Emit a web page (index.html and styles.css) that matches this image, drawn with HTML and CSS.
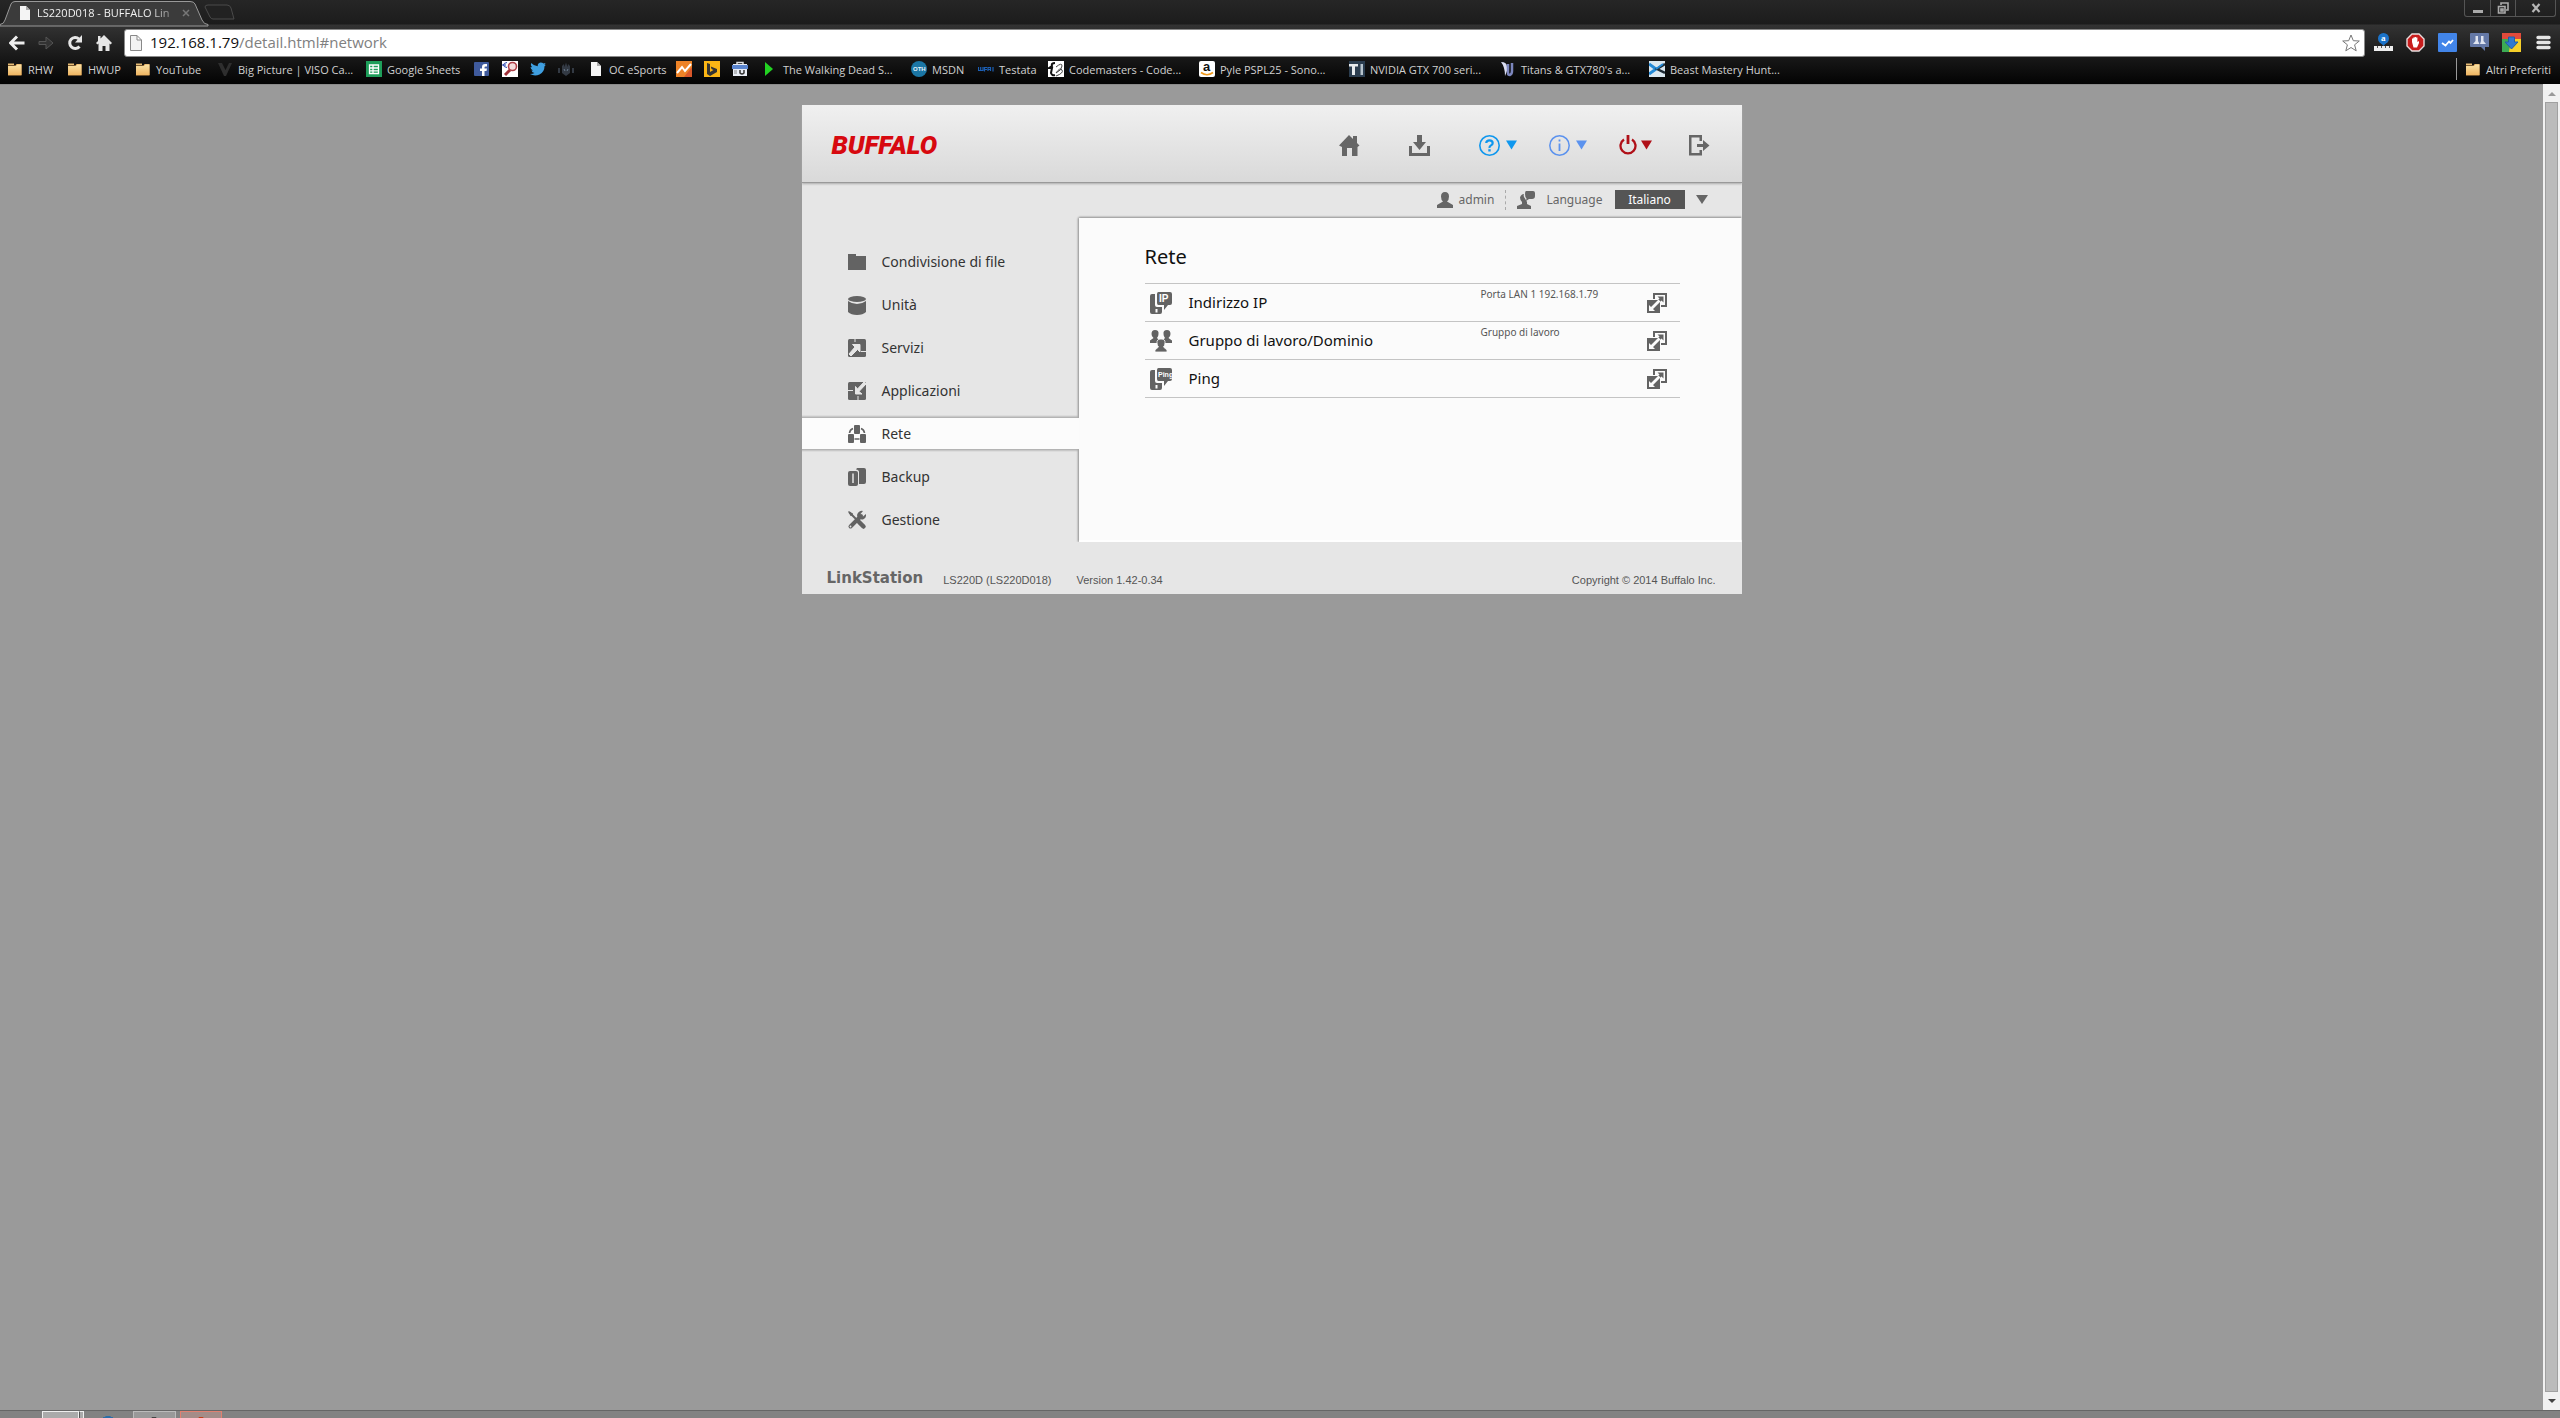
FILE: index.html
```html
<!DOCTYPE html>
<html lang="it">
<head>
<meta charset="utf-8">
<title>LS220D018 - BUFFALO LinkStation</title>
<link rel="stylesheet" href="styles.css">
</head>
<body>
<svg class="defs" aria-hidden="true">
  <defs>
    <linearGradient id="fold" x1="0" y1="0" x2="0" y2="1"><stop offset="0" stop-color="#fbe3a6"/><stop offset="1" stop-color="#efb562"/></linearGradient>
    <symbol id="folder" viewBox="0 0 16 16"><path d="M1 4.500V14.500H14.500V3H9.500L8.500 4.500Z" fill="#d99b4c"/><path d="M1 5H9L10 3.500H14.500V14H1Z" fill="url(#fold)"/><path d="M1 2.500H7V4H1Z" fill="#e7bd77"/></symbol>
    <symbol id="page" viewBox="0 0 16 16"><path d="M3 1H9L13 5V15H3Z" fill="#f4f4f4"/><path d="M9 1L13 5H9Z" fill="#aaa"/></symbol>
    <symbol id="expand" viewBox="0 0 20 20"><path d="M6 0H20V14H14V12H18V2H8V6H6Z" fill="#636363"/><path d="M0 7H13V20H0Z" fill="#636363"/><path d="M10.500 3.500H16.500V9.500L14.500 7.500L11.500 10.500L9.500 8.500L12.500 5.500Z" fill="#636363"/><path d="M2 12L4 14L11.500 6.500L13.500 8.500L6 16L8 18H2Z" fill="#fbfbfb"/></symbol>
    <symbol id="nas" viewBox="0 0 22 22"><path d="M2 2H5V13Q5 15 7 15H12V20Q12 22 10 22H2Q0 22 0 20V4Q0 2 2 2Z"/><path d="M5.500 17H7.500V20.500H5.500Z" fill="#fbfbfb"/><path d="M8.500 0H20Q22 0 22 2V11Q22 13 20 13H18L14 18V13H8.500Q7 13 7 11V2Q7 0 8.500 0Z"/></symbol>
    <symbol id="tri" viewBox="0 0 12 10"><path d="M0 0H12L6 10Z"/></symbol>
  </defs>
</svg>

<header class="chrome">
  <div class="tabs">
    <svg class="tab-shape" viewBox="0 0 200 25" aria-hidden="true"><path d="M0 24.500Q4 24 5 20L11 4Q12 1.500 15 1.500H190Q194 1.500 195 4L202 20Q204 24.500 208 24.500V26H0Z" fill="#3b3b3b" stroke="#999"/><path d="M208 5H227Q230 5 231 8L234 19H213Q211 19 210 17L205 7Q205 5 208 5Z" fill="#222" stroke="#4a4a4a"/></svg>
    <div class="tab"><svg class="i16"><use href="#page"/></svg><span class="tab-title">LS220D018 - BUFFALO Lin</span><button class="plain tab-close" aria-label="Chiudi scheda"><svg viewBox="0 0 8 8"><path d="M1 1L7 7M7 1L1 7" stroke="#777" stroke-width="1.500"/></svg></button></div>
    <div class="win">
      <button class="plain" aria-label="Riduci"><svg viewBox="0 0 12 12"><path d="M1 8H11V11H1Z" fill="#aaa"/></svg></button>
      <button class="plain" aria-label="Ripristina"><svg viewBox="0 0 12 12"><path d="M4 3V1H11V8H9M1.500 4.500H8V11H1.500ZM4 7H6V9H4Z" fill="none" stroke="#aaa" stroke-width="1.600"/></svg></button>
      <button class="plain" aria-label="Chiudi"><svg viewBox="0 0 12 12"><path d="M2.500 2L9.500 10M9.500 2L2.500 10" stroke="#b5b5b5" stroke-width="2.200"/></svg></button>
    </div>
  </div>

  <div class="toolbar">
    <button class="plain" aria-label="Indietro"><svg viewBox="0 0 16 16"><path d="M8 1.500L1.500 8L8 14.500M2 8H15.500" fill="none" stroke="#eee" stroke-width="3"/></svg></button>
    <button class="plain" aria-label="Avanti"><svg viewBox="0 0 16 16"><path d="M1 6.500H8V2L15 8L8 14V9.500H1Z" fill="#333" stroke="#555"/></svg></button>
    <button class="plain" aria-label="Ricarica"><svg viewBox="0 0 16 16"><path d="M12.500 11.500A5.500 5.500 0 1 1 12 4" fill="none" stroke="#e6e6e6" stroke-width="3"/><path d="M15 0V7.500H8Z" fill="#e6e6e6"/></svg></button>
    <button class="plain" aria-label="Pagina iniziale"><svg viewBox="0 0 16 16"><path d="M8 0L16 8L14.500 9.500L13.500 8.500V16H9.500V11H6.500V16H2.500V8.500L1.500 9.500L0 8L2 6V1H4.500V3.500Z" fill="#e6e6e6"/></svg></button>
    <div class="omnibox">
      <svg class="i16" viewBox="0 0 16 16"><path d="M2.500 .500H9L13.500 5V15.500H2.500ZM9 .500V5H13.500" fill="#f3f3f3" stroke="#888"/></svg>
      <a class="url" href="#network"><span class="host">192.168.1.79</span>/detail.html#network</a>
      <button class="plain" aria-label="Aggiungi ai preferiti"><svg class="i18" viewBox="0 0 18 18"><path d="M9 1L11.300 6.700L17.300 7L12.600 10.800L14.200 16.800L9 13.500L3.800 16.800L5.400 10.800L.7 7L6.700 6.700Z" fill="#fff" stroke="#777"/></svg></button>
    </div>
    <div class="ext">
      <svg viewBox="0 0 19 19"><circle cx="9.500" cy="5.500" r="5.500" fill="#1b73c9"/><path d="M7 10H12L9.500 13Z" fill="#1b73c9"/><text x="7" y="8" fill="#fff" font-size="9" font-weight="700" font-family="Liberation Serif, serif">a</text><path d="M0 13H19V18H0Z" fill="#eee"/><path d="M3.500 13V15M7.500 13V15M11.500 13V15M15.500 13V15" stroke="#555"/></svg>
      <svg viewBox="0 0 19 19"><path d="M6 1H13L18 6V13L13 18H6L1 13V6Z" fill="#c81d1d" stroke="#e8dede" stroke-width="1.400"/><path d="M6 9V5.500H7.300V4.500H8.700V4H10V4.500H11.400V9L13 8V10L11 14.500H7.500Z" fill="#fff"/></svg>
      <svg viewBox="0 0 19 19"><rect width="19" height="19" rx="1" fill="#4285e9"/><path d="M4 10L7.500 12.500L11 8.500L12.500 10L15 7" fill="none" stroke="#fff" stroke-width="1.800"/></svg>
      <svg viewBox="0 0 19 19"><path d="M1 0H18Q19 0 19 1V14H15V18L11 14H1Q0 14 0 13V1Q0 0 1 0Z" fill="#6478a6"/><path d="M5.500 3H8V8L9.500 11H3L5.500 8ZM11 3H13.500V8L16 11H10L11 8Z" fill="#dfe4f0"/></svg>
      <svg viewBox="0 0 19 19"><path d="M0 0H19V7H0Z" fill="#e24a3b"/><path d="M0 6H9V19H0Z" fill="#3cab54"/><path d="M9 6H19V19H7Z" fill="#f6cf29"/><path d="M6.500 4H12.500V9H16L9.500 16L3 9H6.500Z" fill="#3079d0" stroke="#205da6"/></svg>
      <button class="plain" aria-label="Menu"><svg viewBox="0 0 19 19"><path d="M4 4.500H15M4 9.500H15M4 14.500H15" stroke="#e5e5e5" stroke-width="3.400" stroke-linecap="round"/></svg></button>
    </div>
  </div>

  <nav class="bookmarks">
    <a href="#"><svg><use href="#folder"/></svg>RHW</a>
    <a href="#"><svg><use href="#folder"/></svg>HWUP</a>
    <a href="#"><svg><use href="#folder"/></svg>YouTube</a>
    <a href="#"><svg viewBox="0 0 16 16"><path d="M1 2L5 2L8.500 9L12 2H15L9 15H7Z" fill="#2e2e2e"/></svg>Big Picture | VISO Ca...</a>
    <a href="#"><svg viewBox="0 0 16 16"><rect width="16" height="16" fill="#1e9e5a"/><path d="M3.500 4H12.500V12.500H3.500ZM3.500 7H12.500M3.500 9.800H12.500M7 4V12.500" fill="none" stroke="#fff" stroke-width="1.300"/></svg>Google Sheets</a>
    <a href="#" aria-label="Facebook"><svg viewBox="0 0 16 16"><rect y="1" width="15" height="14" rx="1" fill="#3f5a9c"/><path d="M8 15V10H6V7.500H8V6Q8 3 11 3H13V5.500H11.500Q10.500 5.500 10.500 6.500V7.500H13L12.500 10H10.500V15Z" fill="#fff"/></svg></a>
    <a href="#" aria-label="Cerca prezzi"><svg viewBox="0 0 16 16"><rect width="16" height="16" fill="#fff"/><path d="M8 9L3 14" stroke="#a03038" stroke-width="3"/><circle cx="10.500" cy="5.500" r="4" fill="#f4dcdc" stroke="#b04048" stroke-width="1.600"/><path d="M5 1.500Q1.500 2 1.500 4T5 6.500M0 4H4" stroke="#223fae" fill="none"/></svg></a>
    <a href="#" aria-label="Twitter"><svg viewBox="0 0 16 16"><path d="M0 13Q3 13 4.500 12Q2 11.500 1.500 9.500H3Q.5 8 .5 6L2 6.300Q0 4.500 1.200 2Q4 5 7.700 5.200Q7.500 2 10.500 1.500Q12.500 1.500 13.500 2.500L15.500 2L14.500 4L16 3.800L14.500 5.300Q14.500 11 9.500 13.500Q4.500 15.500 0 13Z" fill="#3f9fe0"/></svg></a>
    <a href="#" aria-label="Preferito"><svg viewBox="0 0 16 16"><path d="M4 5L6 3L6.500 6L8 1.500L9.500 6L10 3L12 5V12L8 15L4 12ZM0 7H2V12H0ZM14 7H16V12H14Z" fill="#333a44"/><path d="M6 8L7 10M10 8L9 10" stroke="#6d7f90"/></svg></a>
    <a href="#"><svg><use href="#page"/></svg>OC eSports</a>
    <a href="#" aria-label="Analytics"><svg viewBox="0 0 16 16"><rect width="16" height="16" fill="#ee8327"/><path d="M8 16L16 6V16Z" fill="#d9572a"/><path d="M1 12L6 6L9 10L15 3" fill="none" stroke="#fff" stroke-width="2"/></svg></a>
    <a href="#" aria-label="Bing"><svg viewBox="0 0 16 16"><rect width="16" height="16" fill="#fbb615"/><path d="M3 2L6 3V11L9.500 9L7.500 8L6.800 5.500L13 8V11L6 15L3 13Z" fill="#333"/></svg></a>
    <a href="#" aria-label="Store"><svg viewBox="0 0 16 16"><path d="M5 3V1.500H11V3" fill="none" stroke="#ddd" stroke-width="1.500"/><path d="M1 3H15V15H1Z" fill="#e9edf5"/><path d="M0 4H16V8H0Z" fill="#5c86cf"/><path d="M8 9V12Q10 14 12 12V9" fill="none" stroke="#333" stroke-width="1.500"/><path d="M2 10H5M2 12H5" stroke="#888"/></svg></a>
    <a href="#"><svg viewBox="0 0 16 16"><path d="M3 1L11 8L3 15Z" fill="#22d322"/></svg>The Walking Dead S...</a>
    <a href="#"><svg viewBox="0 0 16 16"><circle cx="8" cy="8" r="8" fill="#1b76a5"/><text x="2" y="10" font-size="6" font-weight="700" fill="#e8f4fa" font-family="Liberation Sans, sans-serif">OTH</text></svg>MSDN</a>
    <a href="#"><svg viewBox="0 0 16 16"><path d="M.5 6V9.500H5V6M2.700 6V9M6.500 10.500V6.500H9M6.500 8.500H9M10 10V6.500H12.500V10M10 8.500H12.500M15 6V10.500" fill="none" stroke="#1c5fb4" stroke-width="1.200"/></svg>Testata</a>
    <a href="#"><svg viewBox="0 0 16 16"><rect width="16" height="16" fill="#fff"/><path d="M7 2Q3 2 4 5L1 7H4L3 12Q4 15 7 14" fill="none" stroke="#111" stroke-width="2"/><path d="M8 6Q14 1 14 5T8 12Q12 6 14 9T8 15" fill="none" stroke="#444"/></svg>Codemasters - Code...</a>
    <a href="#"><svg class="loose" viewBox="0 0 16 16"><rect width="16" height="16" rx="2" fill="#fff"/><text x="4" y="10" font-size="13" font-weight="700" fill="#111" font-family="Liberation Sans, sans-serif">a</text><path d="M2 11.500Q8 16 14 11.500" fill="none" stroke="#f19a1c" stroke-width="1.600"/></svg>Pyle PSPL25 - Sono...</a>
    <a href="#"><svg viewBox="0 0 16 16"><rect width="16" height="16" fill="#2b3d4f"/><path d="M0 3H9V5.500H6V14H3V5.500H0Z" fill="#e6eaed"/><path d="M11.500 3H14V14H11.500Z" fill="#b8c4cc"/></svg>NVIDIA GTX 700 seri...</a>
    <a href="#"><svg viewBox="0 0 16 16"><path d="M1 1Q7 1 7 6V10L5 15Q5 6 1 1Z" fill="#d9dcf0"/><path d="M8 3V12Q8 14 10 14Q12 13 12 10V2" fill="none" stroke="#7c86bd" stroke-width="2.500"/></svg>Titans &amp; GTX780's a...</a>
    <a href="#"><svg viewBox="0 0 16 16"><rect width="16" height="16" fill="#dbe7ef"/><path d="M0 3L7 8L0 13" fill="none" stroke="#2389d6" stroke-width="3"/><path d="M16 3L8 8L16 12" fill="none" stroke="#1e2a33" stroke-width="2.500"/><path d="M7 8L14 3" stroke="#2389d6" stroke-width="2"/></svg>Beast Mastery Hunt...</a>
    <a class="other" href="#"><svg><use href="#folder"/></svg>Altri Preferiti</a>
  </nav>
</header>

<div class="viewport">
  <main class="stage">
    <div class="panel">
      <header class="head">
        <a class="brand" href="#">BUFFALO</a>
        <div class="actions">
          <button class="plain" aria-label="Home"><svg width="21" height="21" viewBox="0 0 21 21"><path d="M10 0L14 4V1H18V8L20.500 10.500L18.500 12V21H13V13H8V21H3V12L0 10.500Z"/></svg></button>
          <button class="plain" aria-label="Download"><svg width="21" height="21" viewBox="0 0 21 21"><path d="M8 0H13V7H17L10.500 15L4 7H8Z"/><path d="M0 11H3V18H18V11H21V21H0Z"/></svg></button>
          <button class="plain help" aria-label="Aiuto"><svg width="21" height="21" viewBox="0 0 21 21"><circle cx="10.500" cy="10.500" r="9.700" fill="none" stroke="currentColor" stroke-width="1.600"/><path d="M7.200 8Q7.500 5.300 10.500 5.300T13.700 8Q13.700 9.500 12 10.400T10.500 13" fill="none" stroke="currentColor" stroke-width="2.200"/><path d="M9.300 14.200H11.700V16.500H9.300Z"/></svg><svg width="11" height="10"><use href="#tri"/></svg></button>
          <button class="plain info" aria-label="Informazioni"><svg width="21" height="21" viewBox="0 0 21 21"><circle cx="10.500" cy="10.500" r="9.700" fill="none" stroke="currentColor" stroke-width="1.500"/><path d="M9.600 8.500H11.400V16H9.600ZM9.600 4.500H11.400V6.500H9.600Z"/></svg><svg width="11" height="10"><use href="#tri"/></svg></button>
          <button class="plain power" aria-label="Spegni"><svg width="18" height="21" viewBox="0 0 18 21"><path d="M5 4.500A7.500 7.500 0 1 0 13 4.500" fill="none" stroke="currentColor" stroke-width="2.300"/><path d="M7.600 0H10.400V9H7.600Z"/></svg><svg width="11" height="10"><use href="#tri"/></svg></button>
          <button class="plain" aria-label="Esci"><svg width="21" height="21" viewBox="0 0 21 21"><path d="M0 0H13V6H10.500V2.500H2.500V18H10.500V15H13V20.500H0Z"/><path d="M8 9H14V5L20.500 10.500L14 16V12H8Z"/></svg></button>
        </div>
      </header>

      <div class="sub">
        <svg width="16" height="16" viewBox="0 0 16 16"><path d="M8 0Q12 0 12 4.500Q12 8 10 9.500L16 13V16H0V13L6 9.500Q4 8 4 4.500Q4 0 8 0Z"/></svg>
        <span class="user">admin</span>
        <label class="lang" for="lang"><svg width="18" height="18" viewBox="0 0 18 18"><path d="M7 3Q6 5 8 7.500Q9 9 10 11L10 13L14 15V18H0V15L5 13V11Q3 9 3 6.500Q4 3 7 3Z"/><path d="M9 0H16Q18 0 18 2V5Q18 8 15 8H12L9 10L9.500 7.500Q8 6 8 3Q8 0 9 0Z"/></svg>Language</label>
        <select id="lang"><option>Italiano</option></select>
        <svg class="caret" width="12" height="9" viewBox="0 0 12 9"><path d="M0 0H12L6 9Z"/></svg>
      </div>

      <div class="cols">
        <nav class="menu">
          <a href="#files"><svg viewBox="0 0 18 18"><path d="M0 1H8V3H18V17H0Z"/></svg>Condivisione di file</a>
          <a href="#units"><svg viewBox="0 0 18 18"><ellipse cx="9" cy="3" rx="9" ry="3"/><path d="M0 5Q4 8 9 8T18 5V16Q15 19 9 19T0 16Z"/></svg>Unità</a>
          <a href="#services"><svg viewBox="0 0 18 18"><rect width="18" height="18" rx="1.500"/><path d="M7 0V3M18 12.500H13M4.500 5.500H12V13L9.500 10.500L3 17L1 15L7 8Z" fill="#e6e6e6" stroke="#e6e6e6"/></svg>Servizi</a>
          <a href="#apps"><svg viewBox="0 0 18 18"><rect width="18" height="18" rx="1.500"/><path d="M0 8.500H5M10 18V14M14 12H7.500V4.500L9.500 7L16 0L18 2L11 9.500Z" fill="#e6e6e6" stroke="#e6e6e6"/></svg>Applicazioni</a>
          <a class="on" href="#network"><svg viewBox="0 0 18 18"><rect x="6" width="6" height="9" rx="1"/><rect y="9" width="6" height="9" rx="1"/><rect x="12" y="9" width="6" height="9" rx="1"/><path d="M5 3.500Q2 4.500 1.500 8M13 3.500Q16 4.500 16.500 8M6.500 14H11.500" fill="none" stroke="#636363" stroke-width="1.600"/></svg>Rete</a>
          <a href="#backup"><svg viewBox="0 0 18 18"><path d="M9 0H16Q18 0 18 2V14Q18 16 16 16H11V4Q11 2 8 1.500Z"/><path d="M2 3H8Q10 3 10 5V16Q10 18 8 18H2Q0 18 0 16V5Q0 3 2 3Z"/><path d="M5 5.500V15" stroke="#e6e6e6" stroke-width="1.500"/></svg>Backup</a>
          <a href="#admin"><svg viewBox="0 0 18 18"><path d="M1 1L8 8" stroke="#636363" stroke-width="2"/><path d="M0 0L5 2.500L4.500 4.500L2.500 5Z"/><path d="M11 11L15.500 15.500" stroke="#636363" stroke-width="4.500" stroke-linecap="round"/><path d="M2.500 15.500L13 5" stroke="#636363" stroke-width="4" stroke-linecap="round"/><path d="M15 0L12.500 3V5.500H15L18 3Q18.500 7 15 8.500Q11 9 9.500 6T11.500 .5Q13 -.5 15 0Z"/><circle cx="2.500" cy="15.500" r=".9" fill="#e6e6e6"/></svg>Gestione</a>
        </nav>

        <section class="content">
          <h1>Rete</h1>
          <ul class="list">
            <li><svg width="22" height="22" viewBox="0 0 22 22"><use href="#nas"/><text class="glyph-ip" x="9" y="10">IP</text></svg><span class="name">Indirizzo IP</span><span class="value">Porta LAN 1 192.168.1.79</span><button class="plain" aria-label="Apri Indirizzo IP"><svg width="20" height="20"><use href="#expand"/></svg></button></li>
            <li><svg width="22" height="22" viewBox="0 0 22 22"><path d="M5 0Q9 0 8.500 4Q8.500 6.500 7 8L9 10L7 13H0V10.500L3.500 8Q1.500 6.500 1.500 4Q1.500 0 5 0Z"/><path d="M17 0Q13 0 13.500 4Q13.500 6.500 15 8L13 10L15 13H22V10.500L18.500 8Q20.500 6.500 20.500 4Q20.500 0 17 0Z"/><path d="M11 9Q15.500 9 15 13Q15 15.500 13.500 17L17 20V22H5V20L8.500 17Q7 15.500 7 13Q6.500 9 11 9Z" stroke="#fbfbfb" stroke-width=".8"/></svg><span class="name">Gruppo di lavoro/Dominio</span><span class="value">Gruppo di lavoro</span><button class="plain" aria-label="Apri Gruppo di lavoro/Dominio"><svg width="20" height="20"><use href="#expand"/></svg></button></li>
            <li><svg width="22" height="22" viewBox="0 0 22 22"><use href="#nas"/><text class="glyph-ping" x="8" y="9">Ping</text></svg><span class="name">Ping</span><span class="value"></span><button class="plain" aria-label="Apri Ping"><svg width="20" height="20"><use href="#expand"/></svg></button></li>
          </ul>
        </section>
      </div>

      <footer class="foot">
        <span class="product">LinkStation</span>
        <span class="model">LS220D (LS220D018)</span>
        <span>Version 1.42-0.34</span>
        <span class="copy">Copyright © 2014 Buffalo Inc.</span>
      </footer>
    </div>
  </main>
  <div class="scroll" aria-hidden="true">
    <svg width="17" height="18" viewBox="0 0 17 18"><path d="M5 12L9 8L13 12Z" fill="#999"/></svg>
    <div class="thumb"></div>
    <svg width="17" height="18" viewBox="0 0 17 18"><path d="M5 7H13L9 11Z" fill="#444"/></svg>
  </div>
</div>

<div class="taskbar" aria-hidden="true">
  <i></i><i class="t-on"></i><i class="t-stack"></i><i class="t-blue"></i><i class="t-gray"></i><i class="t-red"></i>
</div>
</body>
</html>
```
FILE: styles.css
```css
* { box-sizing: border-box; }
body {
  margin: 0;
  height: 100vh;
  display: flex;
  flex-direction: column;
  overflow: hidden;
  background: #9a9a9a;
  font-family: "Noto Sans", Tahoma, sans-serif;
}
svg { display: block; flex: none; }
a { color: inherit; text-decoration: none; }
.defs { position: absolute; width: 0; height: 0; }
.plain { padding: 0; border: 0; background: none; color: inherit; display: flex; align-items: center; }
.i16 { width: 16px; height: 16px; }
.i18 { width: 18px; height: 18px; }

/* Browser frame */
.chrome { font-family: "Open Sans", "Segoe UI", sans-serif; background: linear-gradient(#262626 0, #1c1c1c 24px, #333 25px, #1a1a1a 55px, #030303 84px); }
.tabs { height: 25px; display: flex; position: relative; }
.tab-shape { position: absolute; left: 0; top: 0; width: 200px; height: 25px; overflow: visible; }
.tab { position: relative; width: 196px; padding-left: 17px; display: flex; align-items: center; gap: 4px; color: #f2f2f2; font-size: 11px; }
.tab-title { width: 138px; white-space: nowrap; overflow: hidden; mask-image: linear-gradient(90deg, #000 80%, #0004); }
.tab-close { margin-left: 3px; }
.tab-close svg { width: 8px; height: 8px; }
.win { margin: 0 4px 0 auto; width: 92px; height: 17px; display: grid; grid-template-columns: 25px 25px 1fr; border: 1px solid #555; border-top: 0; border-radius: 0 0 3px 3px; }
.win button { justify-content: center; border-left: 1px solid #555; }
.win button:first-child { border-left: 0; }
.win svg { width: 12px; height: 12px; }

.toolbar { height: 33px; padding: 4px 7px 2px 9px; display: flex; align-items: center; }
.toolbar > button { width: 29px; }
.toolbar > button svg { width: 16px; height: 16px; }
.omnibox { flex: 1; height: 28px; padding: 0 4px 0 3px; margin-left: -1px; border: 1px solid #8a8a8a; border-radius: 3px; background: #fff; display: flex; align-items: center; gap: 6px; font-size: 15px; line-height: 26px; }
.url { flex: 1; padding-bottom: 1px; color: #808080; }
.host { color: #111; }
.ext { display: flex; gap: 13px; margin-left: 9px; }
.ext svg { width: 19px; height: 19px; }

.bookmarks { height: 26px; padding: 0 9px 4px 7px; display: grid; grid-template-columns: 60px 68px 82px 149px 108px 28px 28px 28px 30px 88px 28px 28px 30px 149px 67px 70px 151px 150px 151px 149px 1fr auto; align-items: center; color: #d0d0d0; font-size: 11px; white-space: nowrap; }
.bookmarks a { display: flex; align-items: center; gap: 5px; }
.bookmarks svg { width: 16px; height: 16px; }
.bookmarks .loose { overflow: visible; }
.bookmarks .other { height: 22px; padding-left: 8px; border-left: 1px solid #999; }

/* Page area */
.viewport { flex: 1; display: flex; min-height: 0; }
.stage { flex: 1; padding-top: 20px; border-top: 1px solid #8a8a8a; }
.panel { max-width: 940px; margin: 0 auto; background: #e6e6e6; color: #666; }
.panel svg { fill: currentColor; }
.head { height: 78px; padding: 0 32px 0 30px; display: flex; align-items: center; justify-content: space-between; background: linear-gradient(#f0f0f0, #d9d9d9); border-bottom: 1px solid #999; box-shadow: 0 1px 2px #aaa; }
.brand { padding-top: 2px; color: #d7090f; font: italic 900 26px/32px Roboto, "Liberation Sans", sans-serif; }
.actions { display: grid; grid-template-columns: repeat(5, 70px) 21px; margin-top: 3px; }
.actions button { gap: 6px; }
.help { color: #0f97ee; }
.info { color: #5b92ee; }
.actions .power { color: #b01018; gap: 4px; }

.sub { height: 35px; padding: 0 34px 2px; display: flex; align-items: center; justify-content: flex-end; font-size: 12px; line-height: 20px; }
.user { margin-left: 6px; padding-right: 11px; border-right: 1px dashed #aaa; }
.lang { margin: 0 12px 0 11px; display: flex; align-items: center; gap: 11px; }
.sub select { appearance: none; width: 70px; height: 19px; padding: 0; border: 0; border-radius: 0; background: #555; color: #fff; font: inherit; line-height: 19px; text-align: center; text-align-last: center; }
.caret { margin-left: 11px; }

.cols { display: grid; grid-template-columns: 277px 1fr; }
.menu { padding-top: 28px; display: flex; flex-direction: column; gap: 12px; font-size: 14px; color: #333; }
.menu a { position: relative; height: 31px; padding-left: 46px; display: flex; align-items: center; gap: 16px; }
.menu svg { width: 18px; height: 18px; fill: #636363; overflow: visible; }
.menu .on { z-index: 1; background: #fcfcfc; }
.menu .on::before, .menu .on::after { content: ""; position: absolute; left: 0; right: 0; height: 3px; }
.menu .on::before { bottom: 100%; background: linear-gradient(transparent, #aaa); }
.menu .on::after { top: 100%; background: linear-gradient(#aaa, transparent); }
.content { padding: 23px 62px 32px 66px; min-height: 324px; background: #fbfbfb; border-bottom: 2px solid #fff; box-shadow: 0 -1px 2px #999, -1px 0 2px #999; clip-path: inset(-4px 0 0 -4px); color: #111; }
h1 { margin: 0; font-size: 20px; line-height: 32px; font-weight: 400; }
.list { list-style: none; margin: 10px 0 0; padding: 0; border-top: 1px solid #c4c4c4; }
.list li { height: 38px; padding: 0 13px 0 5px; display: grid; grid-template-columns: 22px 276px 1fr 20px; column-gap: 17px; align-items: center; border-bottom: 1px solid #c4c4c4; }
.list svg { color: #636363; }
.name { padding-bottom: 2px; font-size: 15px; line-height: 20px; }
.value { align-self: start; padding-top: 4px; margin-left: -1px; font-size: 10px; line-height: 12px; color: #555; }
.glyph-ip { font: 700 10px "Liberation Sans", sans-serif; fill: #fff; }
.glyph-ping { font: 700 7px "Liberation Sans", sans-serif; fill: #fff; }

.foot { height: 52px; padding: 0 26px 7px 25px; display: flex; align-items: flex-end; font: 11px/14px "Liberation Sans", Arial, sans-serif; color: #555; }
.product { padding-bottom: 1px; font: 700 15px/16px "DejaVu Sans", sans-serif; color: #666; }
.model { margin: 0 25px 0 20px; }
.copy { margin-left: auto; }

.scroll { width: 17px; background: #f1f1f1; display: flex; flex-direction: column; }
.thumb { flex: 1; margin: 0 2px; background: #bbb; border: 1px solid #a0a0a0; }

.taskbar { height: 8px; padding-right: 8px; display: grid; grid-template-columns: 42px 37px 5px 49px 43px 46px; background: #828282; border-top: 1px solid #666; }
.t-on { background: #aaa; border: 1px solid #eee; border-bottom: 0; }
.t-stack { background: #aaa; border: 1px solid #eee; border-left-color: #555; border-bottom: 0; }
.t-blue { background: radial-gradient(ellipse 6px 3px at 24px 8px, #2b6ea8 90%, transparent); }
.t-gray { background: radial-gradient(ellipse 5px 3px at 20px 8px, #444 90%, #999); border: 1px solid #bbb; border-bottom: 0; }
.t-red { margin-left: 4px; background: radial-gradient(ellipse 5px 3px at 20px 8px, #c0401c 90%, #a48c88); border: 1px solid #e08070; border-bottom: 0; }
```
